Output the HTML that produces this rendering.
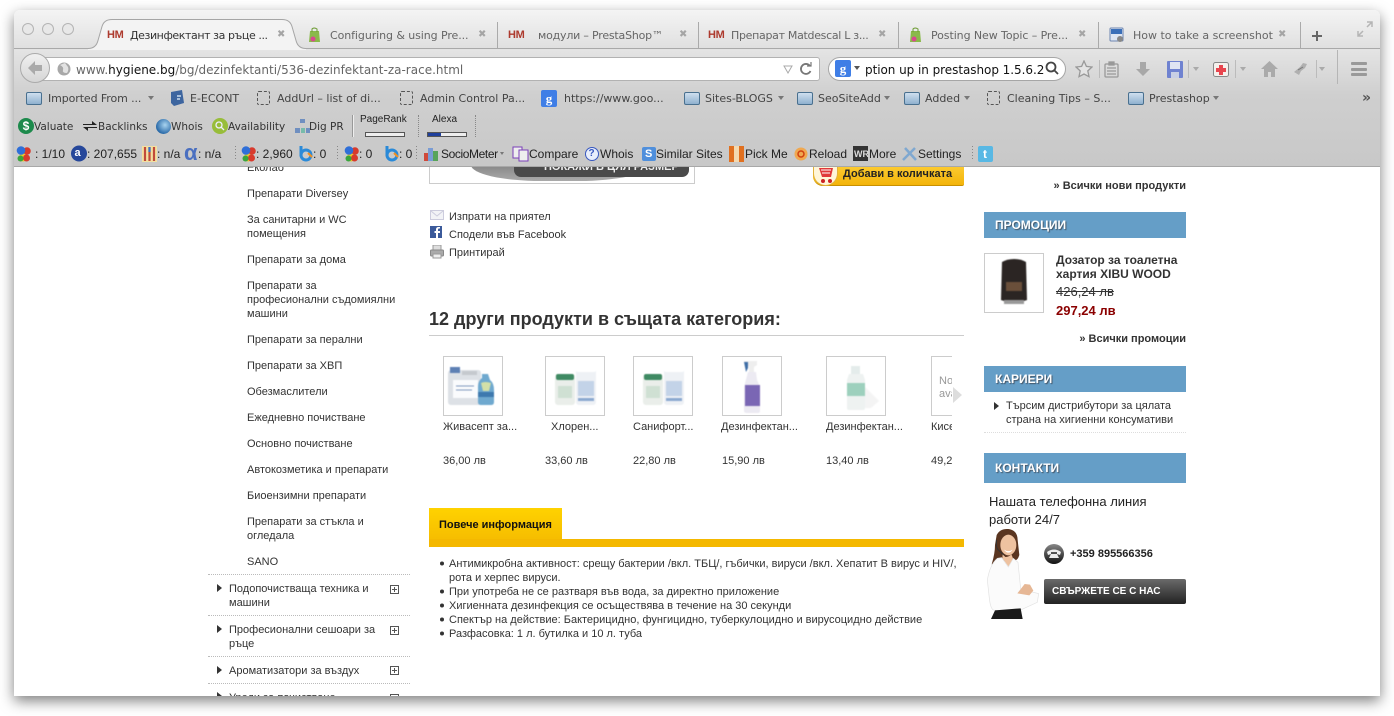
<!DOCTYPE html>
<html><head><meta charset="utf-8"><title>Hygiene</title>
<style>
html,body{margin:0;padding:0;width:1394px;height:716px;overflow:hidden;background:#fff}
*{box-sizing:border-box}
.a,.t,.u,.b,.x{position:absolute}
.t{font:11px/14px "Liberation Sans","Noto Sans CJK SC",sans-serif;color:#333;white-space:nowrap}
.pg .t{margin-top:1px}
.pg .t.n{margin-top:0}
.u{font:11px/14px "DejaVu Sans","Noto Sans CJK SC",sans-serif;color:#444;white-space:nowrap;margin-top:1px}
.tab{color:#666}
.bar{font-size:10.5px;color:#333}
.x{font:bold 10px/14px "DejaVu Sans",sans-serif;color:#a5a5a5}
.hm{font-weight:bold;font-size:11px;color:#ad3a2e;letter-spacing:-.3px}
.d{position:absolute;height:0;border-top:1px dotted #bbb}
.sep{position:absolute;width:1px;background:#aaa}
.th{position:absolute;top:356px;width:60px;height:60px;border:1px solid #ccc;background:#fff}
.th svg{filter:blur(.4px)}
.hd{position:absolute;left:984px;width:202px;background:#659ec7;color:#fff;font:bold 12px/14px "Liberation Sans",sans-serif;padding-left:11px;text-shadow:1px 1px 1px #456}
.pl{position:absolute;width:9px;height:9px;border:1px solid #555;left:390px}
.pl:before{content:"";position:absolute;left:1px;top:3px;width:5px;height:1px;background:#555}
.pl:after{content:"";position:absolute;left:3px;top:1px;width:1px;height:5px;background:#555}
.ar{position:absolute;width:0;height:0;border-left:5px solid #333;border-top:4px solid transparent;border-bottom:4px solid transparent}
.fo{position:absolute;width:16px;height:13px;top:92px;background:linear-gradient(#cfdfee,#8fb1cf);border:1px solid #49708f;border-radius:2px}
.dash{position:absolute;width:13px;height:14px;top:91px;border:1px dashed #555;border-radius:2px}
.dn{position:absolute;width:0;height:0;border-top:4px solid #777;border-left:3.5px solid transparent;border-right:3.5px solid transparent}
.tb{font-size:12px;color:#222;top:147px}
</style></head><body>

<!-- window shadow -->
<div class="a" style="left:14px;top:10px;width:1366px;height:686px;border-radius:6px 6px 0 0;box-shadow:0 5px 14px rgba(0,0,0,.5);background:#fff"></div>

<!-- page content -->
<div class="a" style="left:14px;top:167px;width:1366px;height:529px;background:#fff"></div>

<div class="a pg" style="left:14px;top:167px;width:1366px;height:529px;overflow:hidden">
 <div style="position:absolute;left:-14px;top:-167px;width:1394px;height:716px">
  <!-- sidebar -->
  <div class="t" style="left:247px;top:160px">Еколаб</div>
  <div class="t" style="left:247px;top:186px">Препарати Diversey</div>
  <div class="t" style="left:247px;top:212px">За санитарни и WC<br>помещения</div>
  <div class="t" style="left:247px;top:252px">Препарати за дома</div>
  <div class="t" style="left:247px;top:278px">Препарати за<br>професионални съдомиялни<br>машини</div>
  <div class="t" style="left:247px;top:332px">Препарати за перални</div>
  <div class="t" style="left:247px;top:358px">Препарати за ХВП</div>
  <div class="t" style="left:247px;top:384px">Обезмаслители</div>
  <div class="t" style="left:247px;top:410px">Ежедневно почистване</div>
  <div class="t" style="left:247px;top:436px">Основно почистване</div>
  <div class="t" style="left:247px;top:462px">Автокозметика и препарати</div>
  <div class="t" style="left:247px;top:488px">Биоензимни препарати</div>
  <div class="t" style="left:247px;top:514px">Препарати за стъкла и<br>огледала</div>
  <div class="t" style="left:247px;top:554px">SANO</div>
  <div class="d" style="left:208px;top:574px;width:202px"></div>
  <div class="ar" style="left:217px;top:584px"></div>
  <div class="t" style="left:229px;top:581px">Подопочистваща техника и<br>машини</div>
  <div class="pl" style="top:585px"></div>
  <div class="d" style="left:208px;top:615px;width:202px"></div>
  <div class="ar" style="left:217px;top:625px"></div>
  <div class="t" style="left:229px;top:622px">Професионални сешоари за<br>ръце</div>
  <div class="pl" style="top:626px"></div>
  <div class="d" style="left:208px;top:656px;width:202px"></div>
  <div class="ar" style="left:217px;top:666px"></div>
  <div class="t" style="left:229px;top:663px">Ароматизатори за въздух</div>
  <div class="pl" style="top:666px"></div>
  <div class="d" style="left:208px;top:683px;width:202px"></div>
  <div class="ar" style="left:217px;top:692px"></div>
  <div class="t" style="left:229px;top:690px">Уреди за почистване</div>
  <div class="pl" style="top:694px"></div>

  <!-- main image box -->
  <div class="a" style="left:429px;top:160px;width:266px;height:24px;border:1px solid #ccc;border-top:0"></div>
  <div class="a" style="left:471px;top:150px;width:178px;height:31px;border-radius:0 0 70px 70px/0 0 16px 16px;background:linear-gradient(#666,#aaa)"></div>
  <div class="a" style="left:514px;top:160px;width:175px;height:17px;background:#4a4a4a;border-radius:0 0 7px 7px"></div>
  <div class="t" style="left:544px;top:159px;color:#eee;font-weight:bold">ПОКАЖИ В ЦЯЛ РАЗМЕР</div>

  <!-- cart button -->
  <div class="a" style="left:813px;top:160px;width:151px;height:26px;background:linear-gradient(#ffd23d,#f3b40a);border-radius:0 2px 2px 10px;border-bottom:1px solid #c89000"></div>
  <div class="a" style="left:813px;top:160px;width:25px;height:26px;background:#fff6d8;border-radius:0 0 13px 13px;border:1px solid #e2b23a;border-top:0"></div>
  <svg class="a" style="left:817px;top:166px" width="18" height="19" viewBox="0 0 18 19"><path d="M2 2h14l-2 9H5z" fill="#e0393a"/><path d="M4 4h10M5 7h8" stroke="#fff" stroke-width="1"/><circle cx="6" cy="15" r="2" fill="#c22"/><circle cx="13" cy="15" r="2" fill="#c22"/></svg>
  <div class="t" style="left:843px;top:166px;color:#222;font-weight:bold">Добави в количката</div>

  <!-- actions -->
  <svg class="a" style="left:430px;top:210px" width="14" height="10"><rect x=".5" y=".5" width="13" height="9" fill="#f2f3f6" stroke="#ccd"/><path d="M1 1l6 5 6-5" fill="none" stroke="#ccd"/></svg>
  <div class="t" style="left:449px;top:209px">Изпрати на приятел</div>
  <svg class="a" style="left:430px;top:226px" width="12" height="12"><rect width="12" height="12" fill="#3b5a9a"/><path d="M8 12V7h2V5H8V3.500q0-1 1-1h1V1H8.500Q6 1 6 3.500V5H4.500v2H6v5z" fill="#fff"/></svg>
  <div class="t" style="left:449px;top:227px">Сподели във Facebook</div>
  <svg class="a" style="left:430px;top:245px" width="14" height="14"><rect x="3" y="0" width="8" height="5" fill="#ddd" stroke="#999"/><rect x=".5" y="5" width="13" height="6" rx="1" fill="#aaa" stroke="#888"/><rect x="3" y="9" width="8" height="4" fill="#eee" stroke="#999"/></svg>
  <div class="t" style="left:449px;top:245px">Принтирай</div>

  <div class="t n" style="left:429px;top:308px;font-size:18px;line-height:22px;font-weight:bold">12 други продукти в същата категория:</div>
  <div class="a" style="left:429px;top:335px;width:535px;height:1px;background:#ccc"></div>

  <!-- thumbs -->
  <div class="th" style="left:443px"><svg width="58" height="58"><rect x="4" y="13" width="33" height="35" rx="3" fill="#dde1e6"/><rect x="6" y="10" width="10" height="6" fill="#5d80b4"/><rect x="18" y="14" width="15" height="4" fill="#c5c9ce"/><rect x="9" y="23" width="25" height="18" fill="#fafbfd"/><path d="M12 29h18M12 33h16" stroke="#7f97bd"/><path d="M38 17h6l2 6q4 3 4 10v12q0 3-3 3H37q-3 0-3-3V30q0-6 4-9z" fill="#6fa9cf"/><path d="M37 26q4-2 10 0l-2 8h-6z" fill="#d3e0a8"/><rect x="34" y="35" width="16" height="5" fill="#3e79ae"/></svg></div>
  <div class="th" style="left:545px"><svg width="58" height="58"><rect x="9" y="17" width="20" height="31" rx="3" fill="#eaeeea"/><rect x="10" y="17" width="18" height="6" rx="2" fill="#3f8a63"/><rect x="12" y="29" width="14" height="12" fill="#cfe0d3"/><rect x="30" y="10" width="20" height="38" rx="3" fill="#eef1f5"/><rect x="30" y="10" width="20" height="5" rx="2" fill="#fff"/><rect x="32" y="24" width="16" height="15" fill="#c3d3e8"/><rect x="32" y="41" width="16" height="3" fill="#8ba9d0"/></svg></div>
  <div class="th" style="left:633px"><svg width="58" height="58"><rect x="9" y="17" width="20" height="31" rx="3" fill="#eaeeea"/><rect x="10" y="17" width="18" height="6" rx="2" fill="#3f8a63"/><rect x="12" y="29" width="14" height="12" fill="#cfe0d3"/><rect x="30" y="10" width="20" height="38" rx="3" fill="#eef1f5"/><rect x="30" y="10" width="20" height="5" rx="2" fill="#fff"/><rect x="32" y="24" width="16" height="15" fill="#c3d3e8"/><rect x="32" y="41" width="16" height="3" fill="#8ba9d0"/></svg></div>
  <div class="th" style="left:722px"><svg width="58" height="58"><path d="M21 4h13v4l-3 2v5h-5V9h-4z" fill="#eee"/><path d="M21 5h4v6l-2 4z" fill="#3f6ea6"/><path d="M25 15h8l1 8q3 5 3 12v19q0 2-2 2H24q-3 0-3-2V30z" fill="#eceaf2"/><rect x="22" y="28" width="15" height="21" fill="#7a66b4"/></svg></div>
  <div class="th" style="left:826px"><svg width="58" height="58"><rect x="24" y="9" width="9" height="8" fill="#e4eceb"/><path d="M22 17h14l2 6v28q0 2-2 2H22q-2 0-2-2V23z" fill="#eef2f1"/><rect x="20" y="26" width="18" height="13" fill="#9dd0bd"/><path d="M38 30l14 14-8 7h-6z" fill="#f4f4f4"/></svg></div>
  <div class="a" style="left:931px;top:356px;width:21px;height:60px;border:1px solid #ccc;border-right:0;overflow:hidden;background:#fff"></div>
  <div class="t" style="left:939px;top:373px;color:#999;width:13px;overflow:hidden">No</div>
  <div class="t" style="left:939px;top:386px;color:#999;width:13px;overflow:hidden">avai</div>
  <div class="a" style="left:953px;top:387px;width:0;height:0;border-left:9px solid #ddd;border-top:8px solid transparent;border-bottom:8px solid transparent"></div>

  <div class="t" style="left:443px;top:419px">Живасепт за...</div>
  <div class="t" style="left:551px;top:419px">Хлорен...</div>
  <div class="t" style="left:633px;top:419px">Санифорт...</div>
  <div class="t" style="left:721px;top:419px">Дезинфектан...</div>
  <div class="t" style="left:826px;top:419px">Дезинфектан...</div>
  <div class="t" style="left:931px;top:419px;width:21px;overflow:hidden">Кисе</div>
  <div class="t" style="left:443px;top:453px">36,00 лв</div>
  <div class="t" style="left:545px;top:453px">33,60 лв</div>
  <div class="t" style="left:633px;top:453px">22,80 лв</div>
  <div class="t" style="left:722px;top:453px">15,90 лв</div>
  <div class="t" style="left:826px;top:453px">13,40 лв</div>
  <div class="t" style="left:931px;top:453px;width:21px;overflow:hidden">49,20</div>

  <!-- tab info -->
  <div class="a" style="left:429px;top:508px;width:133px;height:39px;background:linear-gradient(#ffd200,#f4b800)"></div>
  <div class="a" style="left:429px;top:539px;width:535px;height:8px;background:#f4b800"></div>
  <div class="t" style="left:439px;top:517px;color:#111;font-weight:bold">Повече информация</div>
  <div class="t" style="left:449px;top:556px">Антимикробна активност: срещу бактерии /вкл. ТБЦ/, гъбички, вируси /вкл. Хепатит В вирус и HIV/,<br>рота и херпес вируси.<br>При употреба не се разтваря във вода, за директно приложение<br>Хигиенната дезинфекция се осъществява в течение на 30 секунди<br>Спектър на действие: Бактерицидно, фунгицидно, туберкулоцидно и вирусоцидно действие<br>Разфасовка: 1 л. бутилка и 10 л. туба</div>
  <svg class="a" style="left:439px;top:560px" width="6" height="76" fill="#333"><circle cx="3" cy="3.500" r="2"/><circle cx="3" cy="31.500" r="2"/><circle cx="3" cy="45.500" r="2"/><circle cx="3" cy="59.500" r="2"/><circle cx="3" cy="73.500" r="2"/></svg>

  <!-- right column -->
  <div class="t" style="right:208px;top:178px;font-weight:bold">» Всички нови продукти</div>
  <div class="hd" style="top:212px;height:26px;line-height:26px">ПРОМОЦИИ</div>
  <div class="a" style="left:984px;top:253px;width:60px;height:60px;border:1px solid #ccc"></div>
  <svg class="a" style="left:995px;top:256px;filter:blur(.4px)" width="38" height="54"><path d="M7 6q5-3 12-3t12 3l1 38q-13 5-26 0z" fill="#2b2523"/><rect x="11" y="26" width="16" height="9" fill="#6a4f3a"/><rect x="9" y="44" width="20" height="4" fill="#999"/></svg>
  <div class="t n" style="left:1056px;top:253px;font-weight:bold;font-size:12px">Дозатор за тоалетна<br>хартия XIBU WOOD</div>
  <div class="t" style="left:1056px;top:284px;font-size:13px;text-decoration:line-through">426,24 лв</div>
  <div class="t" style="left:1056px;top:303px;font-size:13px;font-weight:bold;color:#8b0000">297,24 лв</div>
  <div class="t" style="right:208px;top:331px;font-weight:bold">» Всички промоции</div>
  <div class="hd" style="top:366px;height:26px;line-height:26px">КАРИЕРИ</div>
  <div class="ar" style="left:994px;top:402px"></div>
  <div class="t" style="left:1006px;top:398px">Търсим дистрибутори за цялата<br>страна на хигиенни консумативи</div>
  <div class="d" style="left:984px;top:432px;width:202px;border-top-color:#ddd"></div>
  <div class="hd" style="top:453px;height:30px;line-height:30px">КОНТАКТИ</div>
  <div class="t n" style="left:989px;top:493px;font-size:13px;line-height:18px;color:#222">Нашата телефонна линия<br>работи 24/7</div>
  <svg class="a" style="left:980px;top:525px;filter:blur(.3px)" width="90" height="100" viewBox="0 0 270 300">
    <path d="M50 30Q60 10 85 12 112 15 113 45L118 90Q112 110 100 105L60 110 35 118Q45 85 45 60z" fill="#5a3520"/>
    <ellipse cx="85" cy="60" rx="24" ry="31" fill="#eec2a0"/>
    <path d="M72 74q13 9 26 0-6 9-13 9t-13-9z" fill="#fff"/>
    <path d="M50 45q-3 20 3 28l20 19" fill="none" stroke="#333" stroke-width="3"/>
    <path d="M68 88l8 8q10 0 18-8l6 14-15 22-18-24z" fill="#eec2a0"/>
    <path d="M52 100Q30 118 22 165L28 220Q32 258 45 256L120 256 172 232 176 206 122 192 114 112 100 100 85 126 65 98z" fill="#fbfbfb" stroke="#e2e2e2" stroke-width="2"/>
    <path d="M112 205l22-28 16 2 10 18-12 14z" fill="#e6b795"/>
    <path d="M45 256L33 282H128L122 250z" fill="#1a1a1a"/>
  </svg>
  <svg class="a" style="left:1044px;top:544px" width="20" height="20"><defs><linearGradient id="g" x1="0" y1="0" x2="0" y2="1"><stop offset="0" stop-color="#888"/><stop offset="1" stop-color="#111"/></linearGradient></defs><circle cx="10" cy="10" r="10" fill="url(#g)"/><path d="M3 8q7-5 14 0l-1 3-3-1V8H7v2l-3 1zM7 10h6l2 4H5z" fill="#eee"/></svg>
  <div class="t" style="left:1070px;top:546px;font-weight:bold;color:#222">+359 895566356</div>
  <div class="a" style="left:1044px;top:579px;width:142px;height:25px;background:linear-gradient(#6a6a6a,#222);border-radius:2px"></div>
  <div class="t" style="left:1052px;top:584px;font-weight:bold;color:#fff;font-size:10px">СВЪРЖЕТЕ СЕ С НАС</div>
 </div>
</div>

<!-- browser chrome -->
<div class="a" style="left:14px;top:10px;width:1366px;height:157px;border-radius:6px 6px 0 0;background:linear-gradient(#f4f4f4 0,#e0e0e0 38px,#e4e4e4 40px,#cfcfcf 85px,#c8c8c8 157px);border-bottom:1px solid #a8a8a8"></div>
<div class="a" style="left:14px;top:48px;width:1366px;height:1px;background:#a9a9a9"></div>

<!-- traffic lights -->
<div class="a" style="left:22px;top:23px;width:12px;height:12px;border-radius:50%;border:1px solid #b4b4b4;background:#e8e8e8"></div>
<div class="a" style="left:42px;top:23px;width:12px;height:12px;border-radius:50%;border:1px solid #b4b4b4;background:#e8e8e8"></div>
<div class="a" style="left:62px;top:23px;width:12px;height:12px;border-radius:50%;border:1px solid #b4b4b4;background:#e8e8e8"></div>

<!-- active tab -->
<svg class="a" style="left:88px;top:19px" width="218" height="31"><path d="M0 29.500q8 0 10-8l4-14q2-7 10-7h170q8 0 10 7l4 14q2 8 10 8v2H0z" fill="#f3f3f3"/><path d="M0 29.500q8 0 10-8l4-14q2-7 10-7h170q8 0 10 7l4 14q2 8 10 8" fill="none" stroke="#a5a5a5"/></svg>
<div class="t hm" style="left:107px;top:28px">HM</div>
<div class="u" style="left:130px;top:28px;color:#333;letter-spacing:-.42px">Дезинфектант за ръце ...</div>
<div class="x" style="left:277px;top:28px">✖</div>

<!-- tabs -->
<svg class="a" style="left:308px;top:27px" width="13" height="16"><path d="M2 4h9l1 11H1z" fill="#8ab94a"/><path d="M4 5V2q2-2 5 0v3" fill="none" stroke="#6a9a30"/><circle cx="5" cy="12" r="2.500" fill="#d8488f"/></svg>
<div class="u tab" style="left:330px;top:28px;letter-spacing:-.08px">Configuring &amp; using Pre...</div>
<div class="x" style="left:478px;top:28px">✖</div>
<div class="sep" style="left:497px;top:22px;height:26px"></div>
<div class="t hm" style="left:508px;top:28px">HM</div>
<div class="u tab" style="left:538px;top:28px;letter-spacing:-.2px">модули – PrestaShop™</div>
<div class="x" style="left:679px;top:28px">✖</div>
<div class="sep" style="left:698px;top:22px;height:26px"></div>
<div class="t hm" style="left:708px;top:28px">HM</div>
<div class="u tab" style="left:731px;top:28px;letter-spacing:-.3px">Препарат Matdescal L з...</div>
<div class="x" style="left:878px;top:28px">✖</div>
<div class="sep" style="left:898px;top:22px;height:26px"></div>
<svg class="a" style="left:909px;top:27px" width="13" height="16"><path d="M2 4h9l1 11H1z" fill="#8ab94a"/><path d="M4 5V2q2-2 5 0v3" fill="none" stroke="#6a9a30"/><circle cx="5" cy="12" r="2.500" fill="#d8488f"/></svg>
<div class="u tab" style="left:931px;top:28px;letter-spacing:-.08px">Posting New Topic – Pre...</div>
<div class="x" style="left:1078px;top:28px">✖</div>
<div class="sep" style="left:1098px;top:22px;height:26px"></div>
<svg class="a" style="left:1109px;top:27px" width="16" height="16"><rect x="1" y="1" width="13" height="13" rx="1" fill="#dfe6f2" stroke="#6c85b0"/><rect x="2" y="2" width="11" height="5" fill="#3b6fb8"/><circle cx="11" cy="12" r="3" fill="#888"/></svg>
<div class="u tab" style="left:1133px;top:28px">How to take a screenshot</div>
<div class="x" style="left:1278px;top:28px">✖</div>
<div class="sep" style="left:1300px;top:22px;height:26px"></div>
<svg class="a" style="left:1311px;top:30px" width="12" height="12"><path d="M6 1v10M1 6h10" stroke="#666" stroke-width="2"/></svg>
<svg class="a" style="left:1357px;top:21px" width="16" height="16" fill="none" stroke="#b5b5b5" stroke-width="1.500"><path d="M10 1h5v5M15 1l-5 5M6 15H1v-5M1 15l5-5"/></svg>

<!-- nav -->
<div class="a" style="left:42px;top:57px;width:778px;height:24px;background:#fff;border:1px solid #b2b2b2;border-radius:0 3px 3px 0"></div>
<div class="a" style="left:20px;top:53px;width:30px;height:30px;border-radius:50%;background:linear-gradient(#f0f0f0,#d6d6d6);border:1px solid #aaa"></div>
<svg class="a" style="left:27px;top:60px" width="16" height="16"><path d="M8 1L1 8l7 7V11h7V5H8z" fill="#aaa"/></svg>
<svg class="a" style="left:57px;top:62px" width="14" height="14"><circle cx="7" cy="7" r="6.500" fill="#a8a8a8"/><path d="M3 3q4 2 3 5t4 3q2-3 1-6L8 1z" fill="#e2e2e2"/></svg>
<div class="u" style="left:76px;top:62px;font-size:12px;color:#666"><span>www.</span><span style="color:#111">hygiene.bg</span><span>/bg/dezinfektanti/536-dezinfektant-za-race.html</span></div>
<svg class="a" style="left:783px;top:65px" width="10" height="9" fill="none" stroke="#aaa"><path d="M1 1h8L5 8z"/></svg>
<svg class="a" style="left:799px;top:62px" width="13" height="14" fill="none" stroke="#777" stroke-width="1.800"><path d="M11 4A5 5 0 1 0 11.500 9"/><path d="M8 4h4V0" stroke-width="1.200"/></svg>

<div class="a" style="left:828px;top:57px;width:238px;height:24px;background:#fff;border:1px solid #a6a6a6;border-radius:12px"></div>
<div class="a" style="left:835px;top:60px;width:16px;height:17px;background:#3f7ee6;border-radius:2px;color:#fff;font:bold 13px/17px 'Liberation Serif',serif;text-align:center">g</div>
<div class="dn" style="left:854px;top:66px;border-top-color:#555"></div>
<div class="u" style="left:865px;top:62px;font-size:12px;color:#111;letter-spacing:-.05px">ption up in prestashop 1.5.6.2</div>
<svg class="a" style="left:1045px;top:61px" width="14" height="14" fill="none" stroke="#444" stroke-width="1.800"><circle cx="6" cy="6" r="4.500"/><path d="M9 9l4 4"/></svg>

<svg class="a" style="left:1075px;top:60px" width="18" height="18"><path d="M9 1l2.400 5.400 5.600.6-4.200 3.900 1.200 5.800L9 14l-5 2.700 1.200-5.800L1 7l5.600-.6z" fill="#e4e4e4" stroke="#999" stroke-width="1.300"/></svg>
<div class="sep" style="left:1099px;top:60px;height:18px;background:#bbb"></div>
<svg class="a" style="left:1104px;top:61px" width="15" height="17" fill="none" stroke="#999" stroke-width="1.300"><rect x="1" y="3" width="13" height="13" rx="1"/><rect x="5" y="1" width="5" height="3" fill="#999"/><path d="M3 7h9M3 10h9M3 13h9"/></svg>
<svg class="a" style="left:1135px;top:61px" width="16" height="16"><path d="M5 1h6v7h4l-7 7-7-7h4z" fill="#a8a8a8"/></svg>
<svg class="a" style="left:1167px;top:61px" width="16" height="17"><rect x="0" y="0" width="16" height="17" rx="1" fill="#6f82d0"/><rect x="3" y="1" width="10" height="7" fill="#dfe4f2"/><rect x="4" y="11" width="8" height="6" fill="#c8cfe4"/></svg>
<div class="sep" style="left:1188px;top:60px;height:18px;background:#bbb"></div>
<div class="dn" style="left:1193px;top:67px;border-top-color:#aaa"></div>
<svg class="a" style="left:1213px;top:61px" width="16" height="16"><rect x=".5" y="1.500" width="15" height="14" rx="2" fill="#f5f0ec" stroke="#888"/><path d="M6 4h4v3h3v4h-3v3H6v-3H3V7h3z" fill="#e8454e"/></svg>
<div class="sep" style="left:1235px;top:60px;height:18px;background:#bbb"></div>
<div class="dn" style="left:1240px;top:67px;border-top-color:#aaa"></div>
<svg class="a" style="left:1261px;top:61px" width="17" height="16"><path d="M8.500 0L0 8h3v8h4v-5h3v5h4V8h3z" fill="#aaa"/></svg>
<svg class="a" style="left:1293px;top:62px" width="16" height="14"><path d="M1 10l6-5 3-4 4 1-2 4-4 3-2 4z" fill="#b0b0b0"/><path d="M5 8l5-3" stroke="#777"/></svg>
<div class="sep" style="left:1316px;top:60px;height:18px;background:#bbb"></div>
<div class="dn" style="left:1319px;top:67px;border-top-color:#aaa"></div>
<div class="sep" style="left:1337px;top:50px;height:34px;background:#b5b5b5"></div>
<div class="a" style="left:1351px;top:62px;width:16px;height:3px;background:#999;border-radius:1px"></div>
<div class="a" style="left:1351px;top:68px;width:16px;height:3px;background:#999;border-radius:1px"></div>
<div class="a" style="left:1351px;top:73px;width:16px;height:3px;background:#999;border-radius:1px"></div>

<!-- bookmarks -->
<div class="fo" style="left:26px"></div><div class="u" style="left:48px;top:91px;letter-spacing:-.1px">Imported From ...</div><div class="dn" style="left:148px;top:96px"></div>
<svg class="a" style="left:170px;top:90px" width="15" height="16"><path d="M1 2l11-2 2 13-10 3-3-3z" fill="#3d659f"/><path d="M7 6h4M7 9h3" stroke="#cde" stroke-width="1.500"/></svg>
<div class="u" style="left:190px;top:91px">E-ECONT</div>
<div class="dash" style="left:257px"></div><div class="u" style="left:277px;top:91px">AddUrl – list of di...</div>
<div class="dash" style="left:400px"></div><div class="u" style="left:420px;top:91px">Admin Control Pa...</div>
<div class="a" style="left:541px;top:90px;width:16px;height:17px;background:#3f7ee6;border-radius:2px;color:#fff;font:bold 13px/17px 'Liberation Serif',serif;text-align:center">g</div>
<div class="u" style="left:564px;top:91px">https://www.goo...</div>
<div class="fo" style="left:684px"></div><div class="u" style="left:705px;top:91px">Sites-BLOGS</div><div class="dn" style="left:778px;top:96px"></div>
<div class="fo" style="left:797px"></div><div class="u" style="left:818px;top:91px">SeoSiteAdd</div><div class="dn" style="left:884px;top:96px"></div>
<div class="fo" style="left:904px"></div><div class="u" style="left:925px;top:91px">Added</div><div class="dn" style="left:964px;top:96px"></div>
<div class="dash" style="left:987px"></div><div class="u" style="left:1007px;top:91px">Cleaning Tips – S...</div>
<div class="fo" style="left:1128px"></div><div class="u" style="left:1149px;top:91px">Prestashop</div><div class="dn" style="left:1213px;top:96px"></div>
<div class="u" style="left:1362px;top:90px;font-weight:bold;color:#555;font-size:14px">»</div>

<!-- toolbar 1 -->
<div class="a" style="left:18px;top:118px;width:16px;height:16px;border-radius:50%;background:#1d8a4c;color:#fff;font:bold 12px/16px 'Liberation Sans',sans-serif;text-align:center">$</div>
<div class="u bar" style="left:34px;top:119px">Valuate</div>
<svg class="a" style="left:82px;top:118px" width="16" height="16"><path d="M1 6h9V3l5 4H1M15 10H6v3L1 9h14" fill="#222"/></svg>
<div class="u bar" style="left:98px;top:119px">Backlinks</div>
<div class="a" style="left:156px;top:119px;width:15px;height:15px;border-radius:50%;background:radial-gradient(circle at 60% 40%,#a9d4f0,#2a6aa8 70%)"></div>
<div class="u bar" style="left:171px;top:119px">Whois</div>
<div class="a" style="left:212px;top:118px;width:16px;height:16px;border-radius:50%;background:#98bd3a"></div>
<svg class="a" style="left:215px;top:121px" width="10" height="10" fill="none" stroke="#eef" stroke-width="1.300"><circle cx="4" cy="4" r="3"/><path d="M6 6l3 3"/></svg>
<div class="u bar" style="left:228px;top:119px">Availability</div>
<svg class="a" style="left:295px;top:118px" width="15" height="16" fill="#6f8fc0"><rect x="5" y="1" width="5" height="4"/><rect x="0" y="10" width="5" height="5"/><rect x="6" y="10" width="4" height="5" fill="#7ba"/><rect x="11" y="10" width="4" height="5"/></svg>
<div class="u bar" style="left:309px;top:119px">Dig PR</div>
<div class="a" style="left:352px;top:115px;width:2px;height:22px;background:#eee;border-left:1px solid #999"></div>
<div class="t" style="left:360px;top:113px;font-size:10px;color:#222">PageRank</div>
<div class="a" style="left:365px;top:132px;width:40px;height:5px;border:1px solid #555;background:#eee"></div>
<div class="d" style="left:418px;top:115px;width:0;height:22px;border-top:0;border-left:1px dotted #888"></div>
<div class="t" style="left:432px;top:113px;font-size:10px;color:#222">Alexa</div>
<div class="a" style="left:427px;top:132px;width:40px;height:5px;border:1px solid #555;background:#eee"></div>
<div class="a" style="left:428px;top:133px;width:13px;height:3px;background:#1f3f9c"></div>
<div class="d" style="left:475px;top:115px;width:0;height:22px;border-top:0;border-left:1px dotted #888"></div>

<!-- toolbar 2 -->
<svg class="a" style="left:0;top:0;pointer-events:none" width="1394" height="167">
 <defs><g id="gg"><circle cx="7" cy="11.500" r="4" fill="#e8c92e"/><circle cx="10.500" cy="12" r="3.500" fill="#d83a2c"/><circle cx="4.500" cy="12.500" r="3" fill="#3aa53c"/><circle cx="11" cy="5" r="3.800" fill="#d83a2c"/><circle cx="5" cy="4.500" r="4.300" fill="#2f6fd8"/></g></defs>
 <use href="#gg" x="16" y="146"/><use href="#gg" x="241" y="146"/><use href="#gg" x="344" y="146"/>
 <circle cx="79" cy="153.500" r="8" fill="#26479a"/>
 <rect x="142" y="146" width="15" height="16" fill="#f3e0a0"/><path d="M145 147v14M149.500 147v14M154 147v14" stroke="#c14a3a" stroke-width="2.200"/><path d="M149.500 147v5" stroke="#3a70c8" stroke-width="2.200"/>
 <g fill="none" stroke="#2a8ad8" stroke-width="3"><path d="M301 146v10"/><circle cx="306" cy="155" r="5"/></g><path d="M308 153l4 4" stroke="#f29020" stroke-width="2"/>
 <g fill="none" stroke="#2a8ad8" stroke-width="3"><path d="M387 146v10"/><circle cx="392" cy="155" r="5"/></g><path d="M394 153l4 4" stroke="#f29020" stroke-width="2"/>
 <path d="M235.500 146v15M337.500 146v15M416.500 146v15M972.500 146v15" stroke="#888" stroke-dasharray="1 2"/>
 <rect x="424" y="153" width="4" height="8" fill="#d04a3a"/><rect x="428" y="148" width="5" height="13" fill="#7a9cd4"/><rect x="433" y="151" width="5" height="10" fill="#58a45a"/>
 <rect x="513" y="147" width="9" height="11" fill="#eee" stroke="#7a3fb8"/><rect x="519" y="150" width="9" height="11" fill="#eee" stroke="#7a3fb8"/>
 <circle cx="592" cy="154" r="6.500" fill="#e8eefc" stroke="#3858c0"/>
 <rect x="642" y="147" width="14" height="14" rx="2" fill="#4f8fdc"/>
 <rect x="729" y="146" width="15" height="16" fill="#f3d9b0"/><rect x="729" y="146" width="5" height="16" fill="#e07020"/><rect x="739" y="146" width="5" height="16" fill="#e07020"/>
 <circle cx="801" cy="154" r="6.500" fill="#f0a850"/><circle cx="801" cy="154" r="3" fill="none" stroke="#d04010" stroke-width="1.500"/>
 <rect x="853" y="146" width="15" height="15" fill="#333"/>
 <path d="M903 160l12-12M905 148l11 12" stroke="#7fa8d0" stroke-width="2.500"/>
 <rect x="978" y="146" width="15" height="16" rx="2" fill="#58b8e4"/>
</svg>
<div class="t" style="left:74.500px;top:146px;color:#fff;font-weight:bold;font-size:11px">a</div>
<div class="t" style="left:184px;top:144px;color:#4a6fc0;font-weight:bold;font-size:22px;line-height:18px">α</div>
<div class="t" style="left:588.500px;top:147px;color:#3858c0;font-weight:bold;font-size:10px">?</div>
<div class="t" style="left:645px;top:147px;color:#fff;font-weight:bold;font-size:11px">S</div>
<div class="t" style="left:854px;top:147px;color:#ddd;font-weight:bold;font-size:9px">WR</div>
<div class="t" style="left:983px;top:147px;color:#fff;font-weight:bold;font-size:12px">t</div>
<div class="t tb" style="left:35px;font-size:12px">: 1/10</div>
<div class="t tb" style="left:87px">: 207,655</div>
<div class="t tb" style="left:157px">: n/a</div>
<div class="t tb" style="left:198px">: n/a</div>
<div class="t tb" style="left:256px">: 2,960</div>
<div class="t tb" style="left:313px">: 0</div>
<div class="t tb" style="left:359px">: 0</div>
<div class="t tb" style="left:399px">: 0</div>
<div class="t tb" style="left:441px;letter-spacing:-.4px">SocioMeter</div>
<div class="dn" style="left:500px;top:152px;border-top-width:3px;border-left-width:2.500px;border-right-width:2.500px"></div>
<div class="t tb" style="left:529px">Compare</div>
<div class="t tb" style="left:600px">Whois</div>
<div class="t tb" style="left:656px">Similar Sites</div>
<div class="t tb" style="left:745px">Pick Me</div>
<div class="t tb" style="left:809px">Reload</div>
<div class="t tb" style="left:869px">More</div>
<div class="t tb" style="left:918px">Settings</div>
</body></html>
